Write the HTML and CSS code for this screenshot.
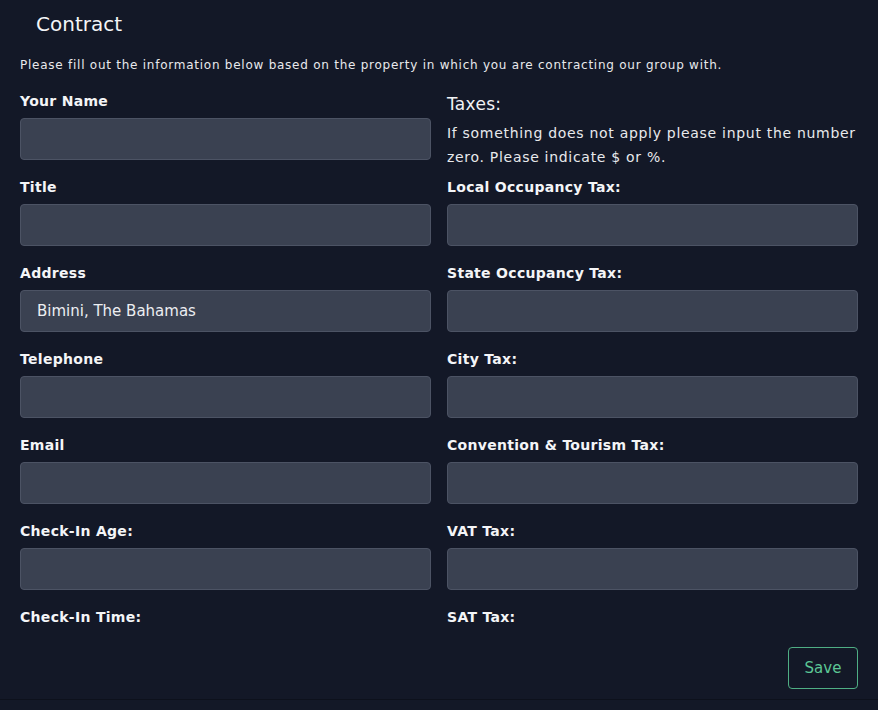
FILE: index.html
```html
<!DOCTYPE html>
<html lang="en">
<head>
<meta charset="utf-8">
<title>Contract</title>
<link rel="stylesheet" href="styles.css">
</head>
<body>
<div class="panel">
  <h1 class="title">Contract</h1>
  <p class="intro">Please fill out the information below based on the property in which you are contracting our group with.</p>
  <div class="columns">
    <div class="col">
      <div class="field"><label class="label">Your Name</label><div class="input"></div></div>
      <div class="field"><label class="label">Title</label><div class="input"></div></div>
      <div class="field"><label class="label">Address</label><div class="input">Bimini, The Bahamas</div></div>
      <div class="field"><label class="label">Telephone</label><div class="input"></div></div>
      <div class="field"><label class="label">Email</label><div class="input"></div></div>
      <div class="field"><label class="label">Check-In Age:</label><div class="input"></div></div>
      <div class="field last"><label class="label">Check-In Time:</label></div>
    </div>
    <div class="col">
      <div class="taxes">
        <h2 class="taxes-title">Taxes:</h2>
        <p class="taxes-note">If something does not apply please input the number zero. Please indicate $ or %.</p>
      </div>
      <div class="field"><label class="label">Local Occupancy Tax:</label><div class="input"></div></div>
      <div class="field"><label class="label">State Occupancy Tax:</label><div class="input"></div></div>
      <div class="field"><label class="label">City Tax:</label><div class="input"></div></div>
      <div class="field"><label class="label">Convention &amp; Tourism Tax:</label><div class="input"></div></div>
      <div class="field"><label class="label">VAT Tax:</label><div class="input"></div></div>
      <div class="field last"><label class="label">SAT Tax:</label></div>
    </div>
  </div>
  <div class="actions"><button class="save">Save</button></div>
</div>
</body>
</html>
```

FILE: styles.css
```css
html, body {
  margin: 0;
  padding: 0;
  background: #131827;
}
body {
  font-family: "DejaVu Sans", "Noto Sans", sans-serif;
  color: #f1f2f5;
  width: 878px;
  height: 710px;
  overflow: hidden;
}
.panel {
  height: 700px;
  box-sizing: border-box;
  padding: 0 20px;
  border-bottom: 1px solid #0d111c;
  background: #131827;
}
.title {
  margin: 0;
  padding: 12px 0 0 16px;
  font-size: 20px;
  line-height: 24px;
  font-weight: 400;
  color: #f4f5f7;
}
.intro {
  margin: 21px 0 0 0;
  font-size: 12px;
  line-height: 16px;
  letter-spacing: 0.75px;
  color: #e8e9ec;
  white-space: nowrap;
}
.columns {
  display: flex;
  gap: 16px;
  margin-top: 18px;
}
.col {
  flex: 1;
  display: flex;
  flex-direction: column;
}
.field {
  margin-bottom: 17px;
}
.field.last {
  margin-bottom: 0;
}
.label {
  display: block;
  font-size: 14px;
  line-height: 20px;
  font-weight: 700;
  letter-spacing: 0.3px;
  color: #f4f5f7;
  margin-bottom: 7px;
}
.field.last .label {
  margin-bottom: 0;
}
.input {
  height: 42px;
  box-sizing: border-box;
  background: #3a4151;
  border: 1px solid #4c5364;
  border-radius: 4px;
  padding: 0 16px;
  font-size: 15px;
  line-height: 40px;
  color: #eceef1;
}
.taxes {
  height: 86px;
  padding-top: 2px;
  box-sizing: border-box;
}
.taxes-title {
  margin: 0;
  font-size: 17px;
  line-height: 22px;
  font-weight: 400;
  letter-spacing: 0.3px;
  color: #f1f2f5;
}
.taxes-note {
  margin: 6px 0 0 0;
  font-size: 14px;
  line-height: 24px;
  letter-spacing: 0.7px;
  color: #e8e9ec;
}
.actions {
  display: flex;
  justify-content: flex-end;
  margin-top: 20px;
}
.save {
  width: 70px;
  height: 42px;
  background: transparent;
  border: 1px solid #4fae84;
  border-radius: 4px;
  color: #5cc795;
  font-family: "DejaVu Sans", sans-serif;
  font-size: 15px;
  font-weight: 500;
  cursor: pointer;
}
```
